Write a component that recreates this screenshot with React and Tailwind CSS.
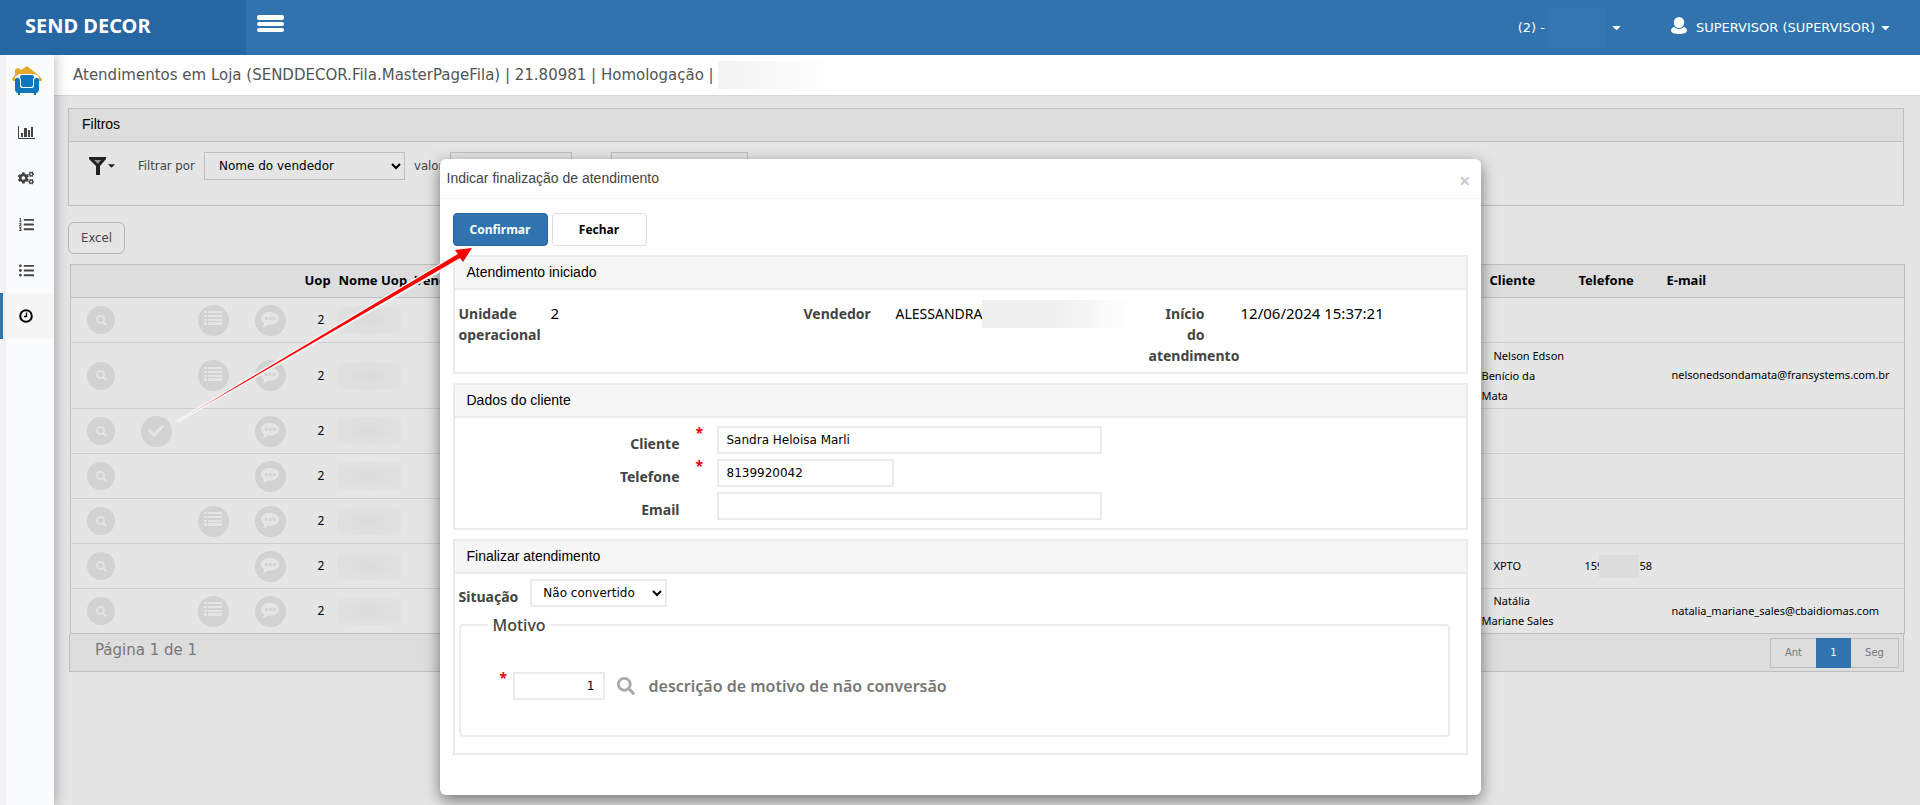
import { FaCheck, FaCogs, FaListOl, FaListUl, FaSearch, FaCaretDown } from 'react-icons/fa'

const rows = [
  { list: true, height: 'h-[45px]' },
  {
    list: true,
    height: 'h-[66px]',
    client: 'Nelson Edson\nBenício da\nMata',
    email: 'nelsonedsondamata@fransystems.com.br',
  },
  { check: true, height: 'h-[45px]' },
  { height: 'h-[45px]' },
  { list: true, height: 'h-[45px]' },
  { height: 'h-[45px]', client: 'XPTO', phone: ['159', '58'] },
  {
    list: true,
    height: 'h-[45px]',
    client: 'Natália\nMariane Sales',
    email: 'natalia_mariane_sales@cbaidiomas.com',
  },
]

const inputClass =
  "h-7 border-2 border-[#ebebeb] bg-white px-2 font-['DejaVu_Sans',sans-serif] text-xs text-black outline-none"

function LogoIcon() {
  return (
    <svg viewBox="0 0 30 30" className="size-[30px]" aria-hidden="true">
      <path d="M0 13 3 9V4c1-2 4-2 5-1l1 1 6-4 10 8 5 5v2h-3l-2-4H5l-2 4H1z" fill="#e5aa2c" />
      <path
        d="M7 8h16l4 3v14l-2 3H5l-2-3V11z"
        fill="#f9fbfd"
      />
      <path d="M8 11c0-1 1-2 2-2h10c1 0 2 1 2 2 0 1-1 2-1 3v5c0 1-1 2-2 2h-8c-1 0-2-1-2-2v-5c0-1-1-2-1-3z" fill="#0f75bc" />
      <path
        d="M3 14c0-3 4-3 5 0v6c0 1 1 2 2 2h10c1 0 2-1 2-2v-6c1-3 5-3 5 0v9c0 2-1 4-3 4v2h-2v-2H8v2H6v-2c-2 0-3-2-3-4z"
        fill="#0f75bc"
      />
    </svg>
  )
}

function ChartIcon() {
  return (
    <svg viewBox="0 0 17 13" className="h-[13px] w-[17px]" fill="currentColor" aria-hidden="true">
      <path d="M0 0h1v12h16v1H0zM3 7h2v4H3zM6 2h3v9H6zM10 4h2v7h-2zM13 1h2v10h-2z" />
    </svg>
  )
}

function ClockIcon() {
  return (
    <svg viewBox="0 0 14 14" className="size-[14px]" fill="none" stroke="currentColor" aria-hidden="true">
      <circle cx="7" cy="7" r="5.800" strokeWidth="2" />
      <path d="M7.500 3.500v4H5" strokeWidth="1.300" />
    </svg>
  )
}

function CommentIcon() {
  return (
    <svg viewBox="0 0 18 16" className="h-4 w-[18px]" aria-hidden="true">
      <path
        d="M9 0c5 0 9 2.700 9 6.300s-4 6.400-9 6.400c-.8 0-1.500 0-2.200-.2C5.500 13.800 3.500 15 1.500 15c1-1 1.600-2 1.600-3.500C1.200 10.300 0 8.500 0 6.300 0 2.700 4 0 9 0z"
        fill="#e5e5e5"
      />
      <path d="M4 5h2.500v3H4zM8 5h2.500v3H8zM12 5h2.500v3H12z" fill="#d2d2d2" />
    </svg>
  )
}

function RoundButton({ label, small, children }) {
  return (
    <button
      aria-label={label}
      className={`mx-auto flex items-center justify-center rounded-full bg-[#d2d2d2] text-[#e5e5e5] ${
        small ? 'size-7' : 'size-[31px]'
      }`}
    >
      {children}
    </button>
  )
}

function Sidebar() {
  const items = [
    { label: 'Gráficos', icon: <ChartIcon /> },
    { label: 'Configurações', icon: <FaCogs size={16} /> },
    { label: 'Lista numerada', icon: <FaListOl size={15} /> },
    { label: 'Lista', icon: <FaListUl size={15} /> },
    { label: 'Fila', icon: <ClockIcon />, active: true },
  ]
  return (
    <aside className="z-10 w-[54px] shrink-0 bg-linear-to-r from-[#f2f2f2] to-[#dcdcdc] pl-[6px] shadow-[2px_0_12px_rgba(0,0,0,0.25)]">
      <nav className="h-full bg-[#f9fbfd] text-[#444]">
        <a href="#inicio" aria-label="Início" className="flex h-[54px] justify-center pt-[11px] pr-[6px]">
          <LogoIcon />
        </a>
        {items.map((item) => (
          <a
            key={item.label}
            href="#menu"
            aria-label={item.label}
            className={`relative flex h-[46px] items-center justify-center pr-2 ${
              item.active
                ? 'bg-[#f5f5f5] text-black before:absolute before:inset-y-0 before:-left-[6px] before:w-[3px] before:bg-[#3073af]'
                : ''
            }`}
          >
            {item.icon}
          </a>
        ))}
      </nav>
    </aside>
  )
}

function Header() {
  return (
    <header className="z-20 flex h-[55px] items-center bg-[#3073af] text-white">
      <div className="flex h-full w-[246px] items-center bg-[#2667a3] pb-1 pl-[25px] text-xl font-bold">
        SEND DECOR
      </div>
      <button aria-label="Menu" className="mb-2 ml-[11px] flex flex-col gap-[2px]">
        <span className="h-[5px] w-[27px] rounded-xs bg-white" />
        <span className="h-1 w-[27px] rounded-xs bg-white" />
        <span className="h-1 w-[27px] rounded-xs bg-white" />
      </button>
      <div className="ml-auto flex items-center pr-7 font-['DejaVu_Sans',sans-serif] text-[13px]">
        <button className="flex items-center">
          (2) -
          <span className="ml-[3px] h-10 w-[59px] bg-[#3575b2]" />
          <FaCaretDown size={13} className="ml-[3px]" />
        </button>
        <button className="ml-12 flex items-center">
          <svg viewBox="0 0 16 17" className="mr-[9px] mb-1 h-[17px] w-4" fill="currentColor" aria-hidden="true">
            <ellipse cx="8" cy="5.500" rx="5.200" ry="5.500" />
            <path d="M3 10c3 2.500 7 2.500 10 0 2 .5 3 2 3 3.500C16 16 12 17 8 17s-8-1-8-3.500C0 12 1 10.500 3 10z" />
          </svg>
          SUPERVISOR (SUPERVISOR)
          <FaCaretDown size={13} className="ml-1" />
        </button>
      </div>
    </header>
  )
}

function Filters() {
  return (
    <section className="border border-[#bfbfbf]">
      <h2 className="h-[33px] border-b border-[#bfbfbf] bg-[#ddd] pl-[13px] font-['Liberation_Sans',sans-serif] text-sm leading-[31px] text-black">
        Filtros
      </h2>
      <div className="flex h-[63px] items-center pb-4 pl-5 text-[13px] text-[#444]">
        <button aria-label="Opções de filtro" className="flex items-center text-[#222]">
          <svg viewBox="0 0 17 18" className="h-[18px] w-[17px]" aria-hidden="true">
            <path d="M0 0h17v2l-6 7v9H7V9L0 2z" fill="#222" />
            <path d="M5 3h7L9 7z" fill="#999" />
          </svg>
          <FaCaretDown size={11} />
        </button>
        <label htmlFor="campo" className="ml-[21px] w-[66px] font-['DejaVu_Sans_Condensed','DejaVu_Sans',sans-serif]">
          Filtrar por
        </label>
        <select
          id="campo"
          className="h-7 w-[201px] border border-[#bfbfbf] bg-[#e5e5e5] pl-[10px] font-['DejaVu_Sans',sans-serif] text-xs text-black"
        >
          <option>Nome do vendedor</option>
        </select>
        <label htmlFor="valor" className="ml-[9px] w-[36px] font-['DejaVu_Sans_Condensed','DejaVu_Sans',sans-serif]">
          valor
        </label>
        <input id="valor" className="h-7 w-[122px] border border-[#bfbfbf]" />
        <input aria-label="Complemento" className="ml-[39px] h-7 w-[137px] border border-[#bfbfbf]" />
      </div>
    </section>
  )
}

function AttendanceTable() {
  return (
    <section>
      <table className="ml-[2px] w-[calc(100%-1px)] table-fixed border-collapse border border-[#bfbfbf] text-[11px] text-black">
        <colgroup>
          <col className="w-[61px]" />
          <col className="w-[49px]" />
          <col className="w-[65px]" />
          <col className="w-[49px]" />
          <col className="w-[40px]" />
          <col className="w-[76px]" />
          <col />
          <col className="w-[92px]" />
          <col className="w-[88px]" />
          <col className="w-[243px]" />
        </colgroup>
        <thead>
          <tr className="h-[33px] border-b border-[#bfbfbf] bg-[#ddd] text-left text-[13px] whitespace-nowrap">
            <th colSpan={4} />
            <th className="pl-[10px]">Uop</th>
            <th className="pl-1">Nome Uop</th>
            <th className="pl-1">Vendedor</th>
            <th className="pl-2">Cliente</th>
            <th className="pl-[5px]">Telefone</th>
            <th className="pl-[5px]">E-mail</th>
          </tr>
        </thead>
        <tbody>
          {rows.map((row, i) => (
            <tr key={i} className={`border-b border-[#cfcfcf] last:border-[#bfbfbf] ${row.height}`}>
              <td>
                <RoundButton label="Consultar" small>
                  <FaSearch size={11} />
                </RoundButton>
              </td>
              <td>
                {row.check && (
                  <RoundButton label="Finalizar">
                    <FaCheck size={16} />
                  </RoundButton>
                )}
              </td>
              <td>
                {row.list && (
                  <RoundButton label="Detalhes">
                    <svg viewBox="0 0 18 14" className="mb-1 h-[14px] w-[18px]" fill="currentColor" aria-hidden="true">
                      <path d="M0 0h3v2H0zM4 0h14v2H4zM0 4h3v2H0zM4 4h14v2H4zM0 8h3v2H0zM4 8h14v2H4zM0 11h3v3H0zM4 11h14v3H4z" />
                    </svg>
                  </RoundButton>
                )}
              </td>
              <td>
                <RoundButton label="Comentários">
                  <CommentIcon />
                </RoundButton>
              </td>
              <td className="pl-[23px] text-xs">2</td>
              <td className="pl-[2px]">
                <div className="h-7 w-[64px] bg-radial from-[#dbdbdb] to-[#e3e3e3]" />
              </td>
              <td />
              <td className="indent-3 leading-5 whitespace-pre-line">
                {row.client?.split('\n').map((line, n) => (
                  <span key={line} className={n === 0 ? 'block' : 'block indent-0'}>
                    {line}
                  </span>
                ))}
              </td>
              <td className="pl-[11px]">
                {row.phone && (
                  <span className="flex items-center">
                    {row.phone[0]}
                    <span className="-ml-1 h-[23px] w-10 bg-[#dcdcdc]" />
                    {row.phone[1]}
                  </span>
                )}
              </td>
              <td className="pl-[10px]">{row.email}</td>
            </tr>
          ))}
        </tbody>
      </table>
      <div className="ml-px flex h-[38px] items-center justify-between border border-t-0 border-[#bfbfbf] bg-[#ddd] pr-1 pl-[25px] font-['DejaVu_Sans',sans-serif] text-[#777]">
        <span className="pb-1 text-[15px]">Página 1 de 1</span>
        <div className="flex h-[30px] text-[10px]">
          <button className="w-[46px] border border-r-0 border-[#bfbfbf]">Ant</button>
          <button className="w-[35px] bg-[#3073af] text-white">1</button>
          <button className="w-12 border border-l-0 border-[#bfbfbf]">Seg</button>
        </div>
      </div>
    </section>
  )
}

function Panel({ title, className, children }) {
  return (
    <section className="mt-[9px] border-2 border-[#ebebeb]">
      <h3 className="h-[33px] border-b-2 border-[#ebebeb] bg-[#f6f6f6] pl-3 font-['Liberation_Sans',sans-serif] text-sm leading-[30px] text-black">
        {title}
      </h3>
      <div className={className}>{children}</div>
    </section>
  )
}

function Info({ label, children }) {
  return (
    <div className="flex">
      <dt className="mr-9 w-14 shrink-0 text-right text-sm leading-[21px] font-bold text-[#444]">{label}</dt>
      <dd className="flex whitespace-nowrap text-black">{children}</dd>
    </div>
  )
}

function Field({ id, label, required, value, width }) {
  return (
    <div className="flex">
      <label htmlFor={id} className="w-[225px] pt-2 text-right text-sm font-bold text-[#444]">
        {label}
      </label>
      <span className="w-[37px] pl-4 text-sm leading-[14px] font-bold text-red-600">{required && '*'}</span>
      <input id={id} defaultValue={value} className={`${inputClass} ${width}`} />
    </div>
  )
}

function Modal() {
  return (
    <div className="absolute inset-x-0 top-[159px] z-30 flex justify-center">
      <div
        role="dialog"
        aria-label="Indicar finalização de atendimento"
        className="w-full max-w-[1041px] rounded-md bg-white shadow-[0_5px_15px_rgba(0,0,0,0.5)]"
      >
        <div className="flex h-10 items-center justify-between border-b border-[#f5f5f5] pr-[10px] pl-[7px]">
          <h2 className="pb-[2px] font-['Liberation_Sans',sans-serif] text-sm text-[#444]">
            Indicar finalização de atendimento
          </h2>
          <button aria-label="Fechar janela" className="pt-1 text-xl font-bold text-[#ccc]">
            ×
          </button>
        </div>
        <div className="px-[13px] pt-[14px] pb-10">
          <div className="flex gap-1 text-xs font-bold">
            <button className="h-[33px] w-[95px] rounded-sm border border-[#2667a3] bg-[#3073af] text-white">
              Confirmar
            </button>
            <button className="h-[33px] w-[95px] rounded-sm border border-[#ddd] bg-white text-black">Fechar</button>
          </div>

          <Panel title="Atendimento iniciado" className="pt-[13px] pb-[6px] pl-1">
            <dl className="grid grid-cols-[345px_345px_1fr] text-[15px] leading-[21px]">
              <Info label="Unidade operacional">2</Info>
              <Info label="Vendedor">
                <span className="text-sm leading-[21px]">ALESSANDRA</span>
                <span className="-mt-[3px] h-7 w-[150px] bg-linear-to-r from-[#efefef] via-[#f0f0f0] to-white" />
              </Info>
              <Info label="Início do atendimento">12/06/2024 15:37:21</Info>
            </dl>
          </Panel>

          <Panel title="Dados do cliente" className="flex flex-col gap-[5px] pt-2 pb-2">
            <Field id="cliente" label="Cliente" required value="Sandra Heloisa Marli" width="w-[385px]" />
            <Field id="telefone" label="Telefone" required value="8139920042" width="w-[177px]" />
            <Field id="email" label="Email" value="" width="w-[385px]" />
          </Panel>

          <Panel title="Finalizar atendimento" className="pt-[5px] pr-4 pb-4 pl-1">
            <div className="flex gap-3">
              <label htmlFor="situacao" className="pt-2 text-sm font-bold text-[#444]">
                Situação
              </label>
              <select
                id="situacao"
                className="h-7 w-[137px] border-2 border-[#ebebeb] bg-white pl-[7px] font-['DejaVu_Sans',sans-serif] text-xs text-black"
              >
                <option>Não convertido</option>
              </select>
            </div>
            <fieldset className="mt-2 rounded-sm border-2 border-[#ebebeb] pr-4 pb-[34px] pl-[27px]">
              <legend className="px-[5px] text-base leading-5 font-medium text-[#444]">Motivo</legend>
              <div className="mt-9 flex items-center pl-3">
                <span className="mb-4 w-[13px] text-sm leading-[14px] font-bold text-red-600">*</span>
                <input aria-label="Motivo" defaultValue="1" className={`${inputClass} w-[92px] text-right`} />
                <button aria-label="Pesquisar motivo" className="mr-[14px] ml-3 text-[#aaa]">
                  <FaSearch size={18} />
                </button>
                <span className="text-base font-semibold text-[#777]">descrição de motivo de não conversão</span>
              </div>
            </fieldset>
          </Panel>
        </div>
      </div>
    </div>
  )
}

function Arrow() {
  return (
    <svg
      viewBox="0 0 310 190"
      className="pointer-events-none absolute top-[240px] left-[170px] z-40 h-[190px] w-[310px]"
      aria-hidden="true"
    >
      <defs>
        <linearGradient id="fade" x1="0" y1="1" x2="1" y2="0">
          <stop offset="0" stopColor="#f00" stopOpacity="0.1" />
          <stop offset="0.2" stopColor="#f00" />
        </linearGradient>
      </defs>
      <path
        d="M8 181 287 15 285 10 302 8 293 21 290 19z"
        fill="#f5f5f5"
        stroke="#f5f5f5"
        strokeWidth="3"
        strokeLinejoin="round"
      />
      <path d="M8 181 288 14 285 10 302 8 293 22 290 18z" fill="url(#fade)" />
    </svg>
  )
}

export default function App() {
  return (
    <div className="relative flex min-h-screen flex-col overflow-hidden bg-[#e5e5e5] font-['Noto_Sans',sans-serif]">
      <Header />
      <div className="flex flex-1">
        <Sidebar />
        <main className="min-w-0 flex-1">
          <h1 className="flex h-[41px] items-center border-b border-[#d6d6d6] bg-white pl-[19px] font-['DejaVu_Sans',sans-serif] text-[15px] text-[#555]">
            Atendimentos em Loja (SENDDECOR.Fila.MasterPageFila) | 21.80981 | Homologação |
            <span className="ml-1 h-7 w-[120px] bg-linear-to-r from-[#f3f3f3] to-white" />
          </h1>
          <div className="pt-3 pr-4 pl-[14px]">
            <Filters />
            <button className="mt-4 mb-[10px] block h-8 w-[57px] rounded-md border border-[#b5b5b5] font-['DejaVu_Sans_Condensed','DejaVu_Sans',sans-serif] text-[13px] text-[#444]">
              Excel
            </button>
            <AttendanceTable />
          </div>
        </main>
      </div>
      <Modal />
      <Arrow />
    </div>
  )
}
